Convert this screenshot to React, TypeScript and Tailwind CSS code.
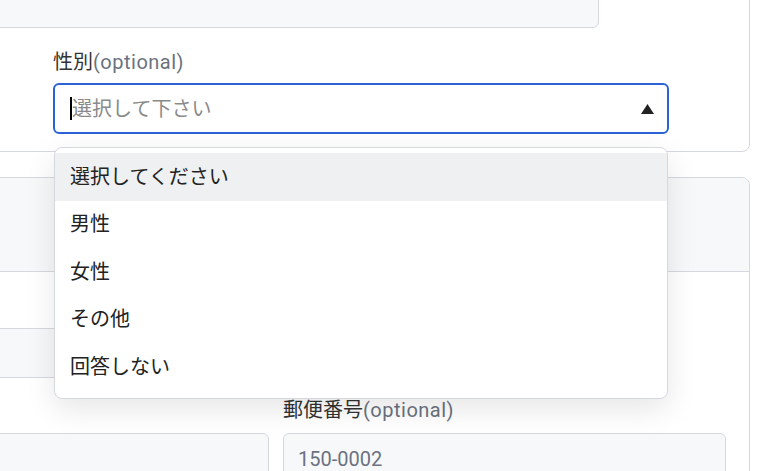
const options = ["選択してください", "男性", "女性", "その他", "回答しない"];

const font = { fontFamily: '"Roboto", "Noto Sans CJK JP", sans-serif' };

function Label({ text }: { text: string }) {
    return (
        <div className="text-[20px] leading-[28px] text-[#333]">
            {text}
            <span className="tracking-[0.5px] text-[#6b7280]">(optional)</span>
        </div>
    );
}

function Field({ className, value }: { className: string; value?: string }) {
    return (
        <div
            className={`flex items-center rounded-md border border-[#d5d9df] bg-[#f7f8fa] px-[14px] text-[20px] text-[#6b7280] ${className}`}
        >
            {value}
        </div>
    );
}

export default function App() {
    return (
        <div className="relative h-[471px] w-[784px] overflow-hidden bg-white" style={font}>
            <div className="ml-[-200px] w-[950px]">

                {/* card 1 */}
                <div className="-mt-[40px] rounded-lg border border-[#d5d9df] bg-white pt-[11px] pb-[17px]">
                    <Field className="ml-[99px] h-[56px] w-[699px]" />

                    <div className="ml-[252px] mt-[20px] w-[616px]">
                        <Label text="性別" />

                        <div className="relative mt-[7px]">
                            <div className="flex h-[51px] items-center rounded-md border-2 border-[#2b63d6] bg-white pl-[15px] pr-[13px]">
                                <span className="h-[23px] w-[2px] bg-black" />
                                <span className="flex-1 text-[20px] leading-[28px] text-[#8a8a8a]">
                                    選択して下さい
                                </span>
                                <svg width="13" height="10" viewBox="0 0 13 10">
                                    <polygon points="6.5,0 13,10 0,10" fill="#222" />
                                </svg>
                            </div>

                            {/* dropdown */}
                            <ul className="absolute left-[1px] top-[64px] z-10 w-[614px] rounded-lg border border-[#d5d9df] bg-white pt-[5px] pb-[7px] shadow-[0_10px_30px_rgba(0,0,0,0.10)]">
                                {options.map((o, i) => (
                                    <li
                                        key={o}
                                        className={`flex h-[47.5px] items-center px-[15px] text-[20px] text-[#222] ${i === 0 ? "bg-[#eff0f2]" : ""}`}
                                    >
                                        {o}
                                    </li>
                                ))}
                            </ul>
                        </div>
                    </div>
                </div>

                {/* card 2 */}
                <div className="mt-[25px] h-[400px] rounded-lg border border-[#d5d9df] bg-white">
                    <div className="h-[94px] rounded-t-lg border-b border-[#d5d9df] bg-[#f7f8fa]" />

                    <div className="pl-[99px]">
                        <Field className="mt-[56px] h-[50px] w-[699px]" />

                        <div className="mt-[18px] flex gap-[14px]">
                            <div className="w-[369px]">
                                <div className="h-[28px]" />
                                <Field className="mt-[9px] h-[52px]" />
                            </div>
                            <div className="w-[443px]">
                                <Label text="郵便番号" />
                                <Field className="mt-[9px] h-[52px]" value="150-0002" />
                            </div>
                        </div>
                    </div>
                </div>

            </div>
        </div>
    );
}
